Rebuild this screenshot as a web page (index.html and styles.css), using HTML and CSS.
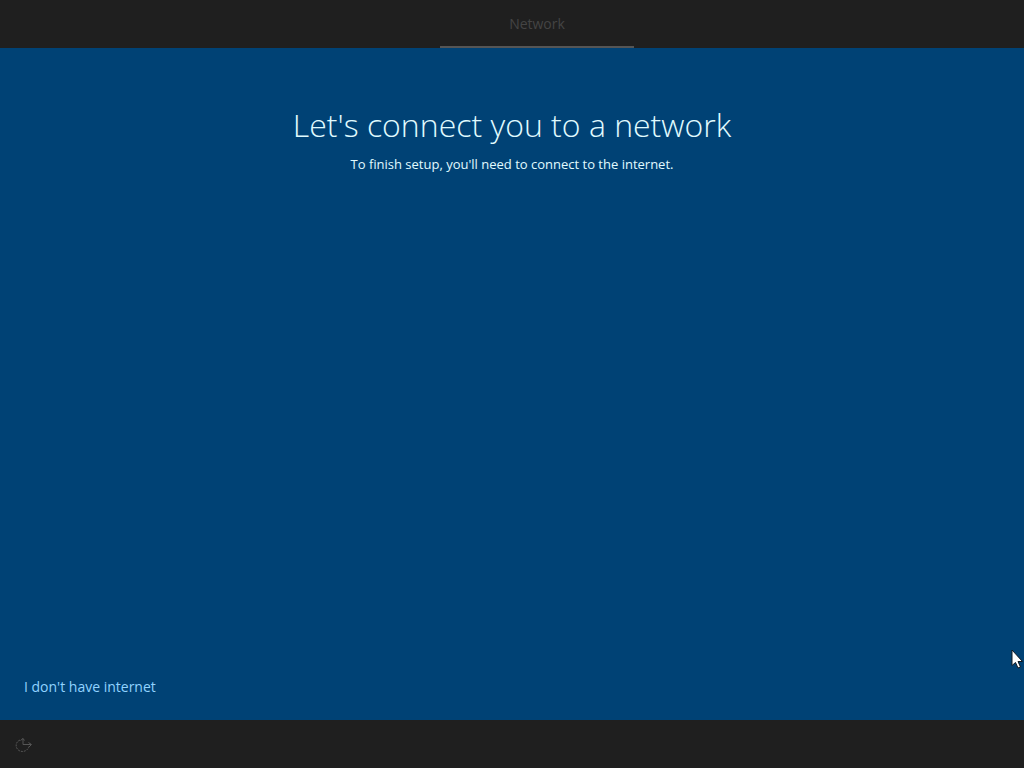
FILE: index.html
```html
<!DOCTYPE html>
<html lang="en">
<head>
<meta charset="utf-8">
<meta name="viewport" content="width=device-width, initial-scale=1">
<title>Network setup</title>
<link rel="stylesheet" href="styles.css">
</head>
<body>
<header class="steps">
  <span class="step" aria-current="step">Network</span>
</header>
<main class="panel">
  <h1 class="title">Let's connect you to a network</h1>
  <p class="subtitle">To finish setup, you'll need to connect to the internet.</p>
  <a class="skip" href="#">I don't have internet</a>
</main>
<footer class="tools">
  <button class="access" type="button" aria-label="Ease of Access">
    <svg width="18" height="16" viewBox="0 0 18 16" fill="none" stroke="currentColor">
      <path d="M5 3C0 5 0 11 4 13.500C8 16 13 13.500 14 9.500" stroke-dasharray="2 1"/>
      <path d="M8 1.500V7.500H16M13.500 5.500L16.500 7.500L14 10M5.500 3.500L8 1.500L9.500 3.500"/>
    </svg>
  </button>
</footer>
<svg class="pointer" width="12" height="20" viewBox="0 0 12 20" aria-hidden="true">
  <path d="M1 1V16.500L4.500 13.500L7 19L9.500 18L7 12.500H11.500Z" fill="#fff" stroke="#101820"/>
</svg>
</body>
</html>
```
FILE: styles.css
```css
* {
  box-sizing: border-box;
}

body {
  display: flex;
  flex-direction: column;
  min-height: 100vh;
  margin: 0;
  background: #004275;
  color: #e0fbff;
  font-family: "Segoe UI", "Open Sans", "Noto Sans", sans-serif;
}

.steps {
  display: flex;
  justify-content: center;
  height: 48px;
  padding-left: 50px;
  background: #1f1f1f;
}

.step {
  width: 194px;
  padding-top: 2px;
  border-bottom: 2px solid #555;
  color: #444;
  font-size: 14px;
  line-height: 44px;
  text-align: center;
}

.panel {
  display: flex;
  flex: 1;
  flex-direction: column;
  align-items: center;
  padding: 53px 24px 21px;
}

.title {
  margin: 0;
  font-size: 32px;
  font-weight: 300;
  line-height: 48px;
  text-align: center;
}

.subtitle {
  margin: 5px 0 0;
  font-size: 13px;
  line-height: 20px;
  text-align: center;
}

.skip {
  align-self: flex-start;
  margin-top: auto;
  color: #91d3ff;
  font-size: 14px;
  line-height: 24px;
  text-decoration: none;
}

.tools {
  display: flex;
  align-items: center;
  height: 48px;
  padding: 2px 15px 0;
  background: #1f1f1f;
}

.access {
  display: flex;
  padding: 0;
  border: 0;
  background: none;
  color: #555;
}

.pointer {
  position: absolute;
  top: 649px;
  right: 1px;
}
```
